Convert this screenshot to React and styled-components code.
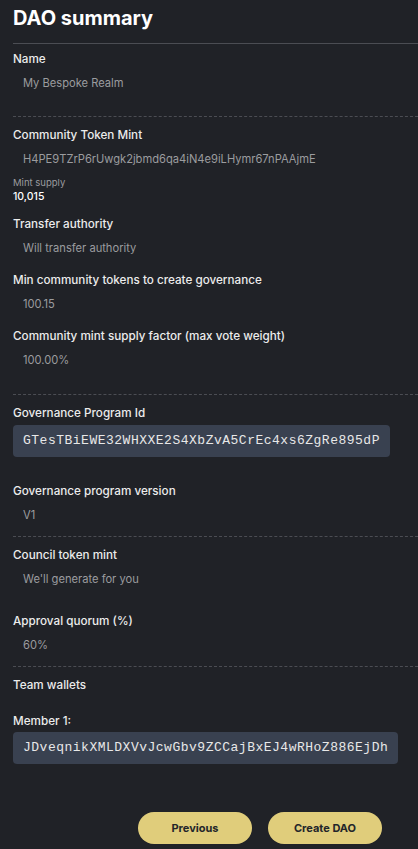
import React from 'react'
import styled, {createGlobalStyle} from 'styled-components'

const GlobalStyle = createGlobalStyle`
  html, body {
    margin: 0;
    padding: 0;
    background: #202227;
    overflow: hidden;
  }
  body {
    font-family: Inter, "Noto Sans", sans-serif;
  }
`

const summary = [
  {
    pad: 25,
    gap: 16,
    items: [{label: 'Name', value: 'My Bespoke Realm'}]
  },
  {
    pad: 26,
    gap: 16,
    items: [
      {
        label: 'Community Token Mint',
        value: 'H4PE9TZrP6rUwgk2jbmd6qa4iN4e9iLHymr67nPAAjmE',
        supply: '10,015'
      },
      {label: 'Transfer authority', value: 'Will transfer authority'},
      {label: 'Min community tokens to create governance', value: '100.15'},
      {label: 'Community mint supply factor (max vote weight)', value: '100.00%'}
    ]
  },
  {
    pad: 13,
    gap: 16,
    items: [
      {label: 'Governance Program Id', code: 'GTesTBiEWE32WHXXE2S4XbZvA5CrEc4xs6ZgRe895dP'},
      {label: 'Governance program version', value: 'V1'}
    ]
  },
  {
    pad: 13,
    gap: 26,
    items: [
      {label: 'Council token mint', value: "We'll generate for you"},
      {label: 'Approval quorum (%)', value: '60%'}
    ]
  }
]

const App = () => {
  return (
    <Page>
      <GlobalStyle />
      <Title>DAO summary</Title>
      {summary.map((section, i) => (
        <Section key={i} $dashed={i > 0} $pad={section.pad} $gap={section.gap}>
          {section.items.map((item) => (
            <Item key={item.label}>
              <Label>{item.label}</Label>
              {item.value && <Value>{item.value}</Value>}
              {item.code && <CodeBox>{item.code}</CodeBox>}
              {item.supply && (
                <Supply>
                  <SupplyLabel>Mint supply</SupplyLabel>
                  <SupplyValue>{item.supply}</SupplyValue>
                </Supply>
              )}
            </Item>
          ))}
        </Section>
      ))}
      <Section $dashed $pad={0} $gap={16}>
        <Label>Team wallets</Label>
        <Member>
          <Label>Member 1:</Label>
          <CodeBox>JDveqnikXMLDXVvJcwGbv9ZCCajBxEJ4wRHoZ886EjDh</CodeBox>
        </Member>
      </Section>
      <Buttons>
        <Button>Previous</Button>
        <Button>Create DAO</Button>
      </Buttons>
    </Page>
  )
}

const Page = styled.div`
  padding-left: 13px;
  height: 849px;
  box-sizing: border-box;
  color: #e6e6e6;
`

const Title = styled.h1`
  margin: 0;
  padding-top: 6px;
  font-size: 20px;
  line-height: 24px;
  font-weight: 700;
  color: #ffffff;
  height: 37px;
  border-bottom: 1px solid #4b4d53;
`

const Section = styled.div`
  padding-top: ${(p) => (p.$dashed ? '10px' : '7px')};
  padding-bottom: ${(p) => p.$pad}px;
  border-top: ${(p) => (p.$dashed ? '1px dashed #4b4d53' : 'none')};
  display: flex;
  flex-direction: column;
  gap: ${(p) => p.$gap}px;
`

const Item = styled.div`
  display: flex;
  flex-direction: column;
`

const Label = styled.div`
  font-size: 11.7px;
  line-height: 16px;
  font-weight: 500;
  color: #ececec;
`

const Value = styled.div`
  margin-top: 8px;
  padding-left: 10px;
  font-size: 11.15px;
  line-height: 16px;
  color: #9b9c9f;
`

const CodeBox = styled.div`
  align-self: flex-start;
  margin-top: 4px;
  margin-bottom: 10px;
  padding: 0 10px;
  height: 32px;
  line-height: 32px;
  border-radius: 4px;
  background: #394150;
  font-family: "Liberation Mono", "DejaVu Sans Mono", monospace;
  font-size: 13px;
  letter-spacing: 0.5px;
  color: #e8e8e8;
`

const Supply = styled.div`
  margin-top: 10px;
  margin-bottom: -4px;
  display: flex;
  flex-direction: column;
`

const SupplyLabel = styled.div`
  font-size: 9.5px;
  line-height: 12px;
  color: #9b9c9f;
`

const SupplyValue = styled.div`
  margin-top: 1px;
  font-size: 10.5px;
  line-height: 14px;
  font-weight: 500;
  color: #ffffff;
`

const Member = styled.div`
  margin-top: 4px;
  display: flex;
  flex-direction: column;
  & > div:last-child {
    margin-top: 3px;
    margin-bottom: 0;
  }
`

const Buttons = styled.div`
  margin-top: 48px;
  padding-right: 36px;
  display: flex;
  justify-content: flex-end;
  gap: 16px;
`

const Button = styled.button`
  width: 114px;
  height: 32px;
  border: none;
  border-radius: 16px;
  background: #e0cd7b;
  color: #23252a;
  font-family: Inter, "Noto Sans", sans-serif;
  font-size: 11px;
  font-weight: 700;
  cursor: pointer;
`

export default App
